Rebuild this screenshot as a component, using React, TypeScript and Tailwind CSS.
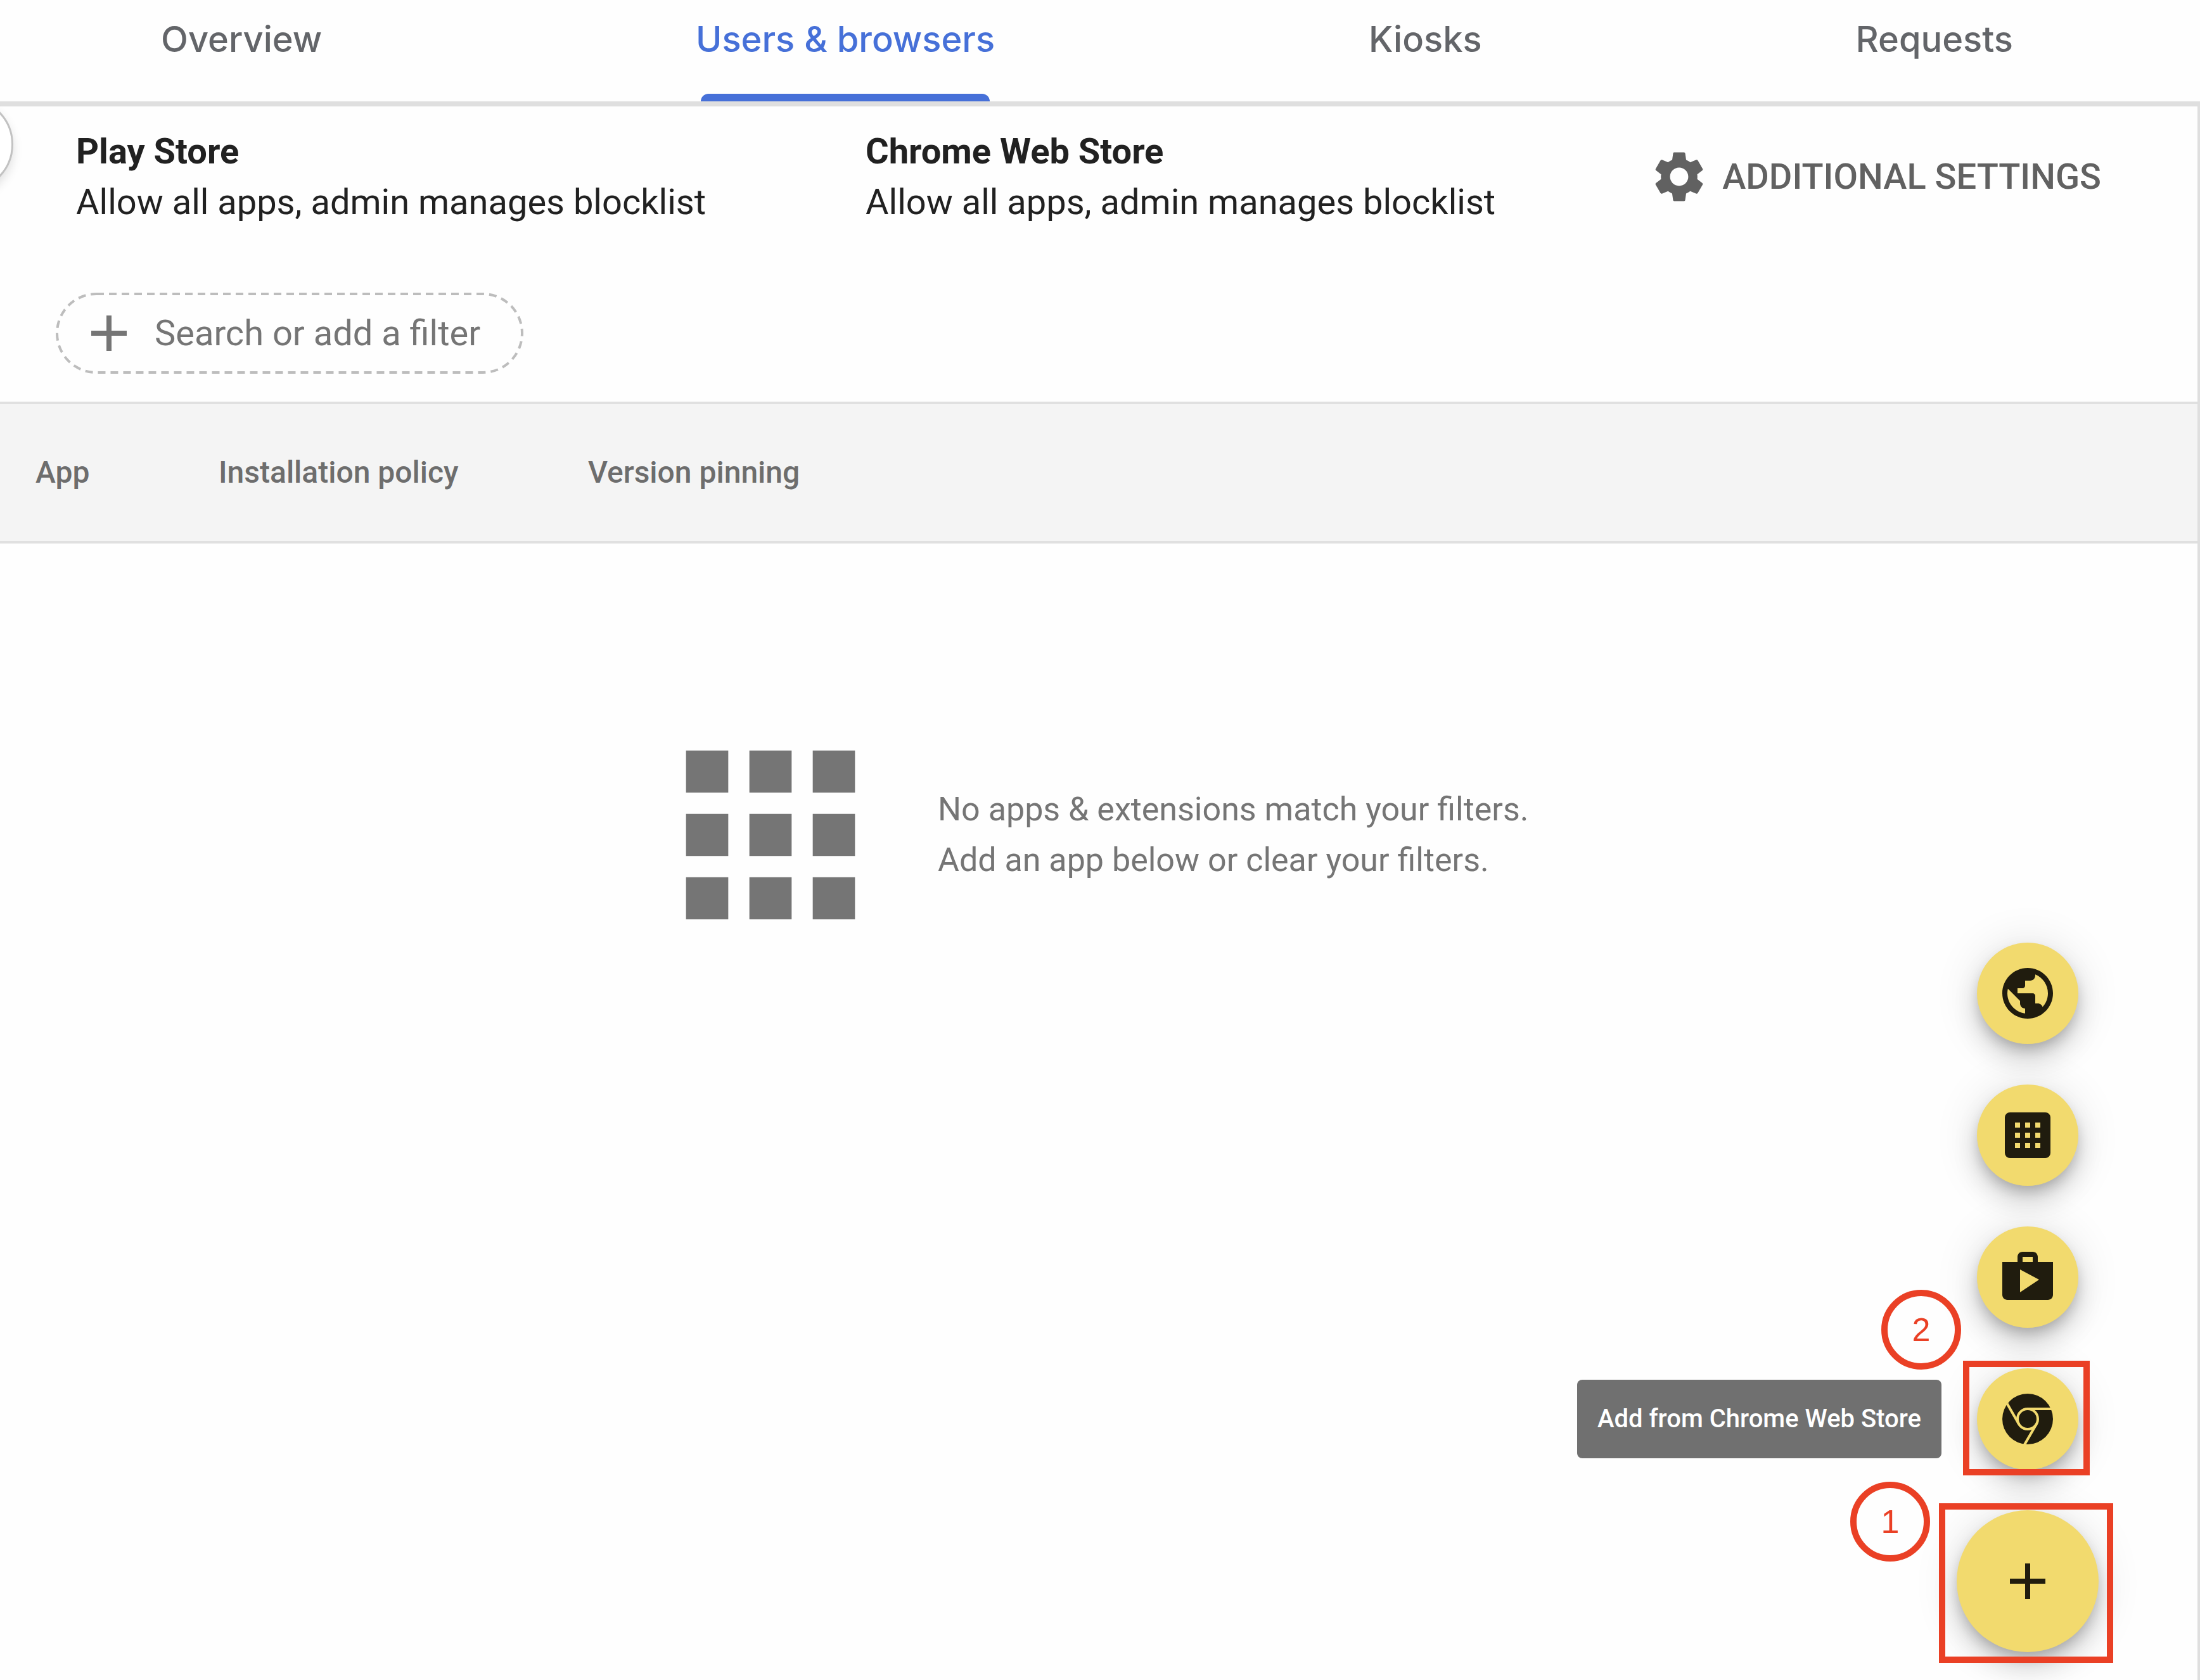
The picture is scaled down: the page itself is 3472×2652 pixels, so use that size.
import { MdAdd, MdApps, MdPublic, MdSettings, MdShop } from "react-icons/md";
import type { ReactNode } from "react";

const tabs = [
  { label: "Overview", active: false },
  { label: "Users & browsers", active: true },
  { label: "Kiosks", active: false },
  { label: "Requests", active: false },
];

const stores = [
  { name: "Play Store", policy: "Allow all apps, admin manages blocklist" },
  { name: "Chrome Web Store", policy: "Allow all apps, admin manages blocklist" },
];

function AppGridIcon() {
  return (
    <svg viewBox="0 0 24 24" className="size-24" fill="currentColor" aria-hidden="true">
      <path
        fillRule="evenodd"
        d="M5 3h14a2 2 0 0 1 2 2v14a2 2 0 0 1-2 2H5a2 2 0 0 1-2-2V5a2 2 0 0 1 2-2zM7 7v2h2V7zm4 0v2h2V7zm4 0v2h2V7zM7 11v2h2v-2zm4 0v2h2v-2zm4 0v2h2v-2zM7 15v2h2v-2zm4 0v2h2v-2zm4 0v2h2v-2z"
      />
    </svg>
  );
}

function ChromeIcon() {
  return (
    <svg viewBox="0 0 24 24" className="size-24" aria-hidden="true">
      <circle cx="12" cy="12" r="10" fill="currentColor" />
      <g fill="none" stroke="#f2da6e" strokeWidth="1">
        <circle cx="12" cy="12" r="4" />
        <path d="M12 8h9.6M8.54 14L3.9 5.96M15.46 14L10.6 22.4" />
      </g>
    </svg>
  );
}

function Fab({ label, children }: { label: string; children: ReactNode }) {
  return (
    <button
      type="button"
      aria-label={label}
      className="flex size-40 items-center justify-center rounded-full bg-[#f2da6e] text-[#201c0e] shadow-[0_12px_20px_-4px_rgba(0,0,0,0.2),0_24px_40px_rgba(0,0,0,0.14),0_4px_72px_rgba(0,0,0,0.12)]"
    >
      {children}
    </button>
  );
}

function Step({ n, className }: { n: number; className: string }) {
  return (
    <span
      className={`absolute flex size-[126px] items-center justify-center rounded-full border-10 border-[#ea4025] font-['Liberation_Sans',sans-serif] text-[52px] text-[#ea4025] ${className}`}
    >
      {n}
    </span>
  );
}

export default function App() {
  return (
    <div className="relative flex min-h-screen flex-col overflow-hidden bg-[#fefefe] font-[Roboto,sans-serif] text-[56px] leading-[80px] text-[#212121]">
      <nav className="flex h-[168px] justify-between border-b-8 border-[#dfdfdf] pr-[295px] pl-[254px] font-[Inter,sans-serif] font-medium">
        {tabs.map((tab) => (
          <a
            key={tab.label}
            href="#"
            className={
              tab.active
                ? "flex flex-col justify-between pt-[22px] text-[#4670d8]"
                : "pt-[22px] text-[#636569]"
            }
          >
            {tab.label}
            {tab.active && <span className="mx-2 h-3 rounded-t-xl bg-[#4670d8]" />}
          </a>
        ))}
      </nav>

      <button
        type="button"
        aria-label="Expand navigation"
        className="absolute top-[154px] -left-[127px] size-[148px] rounded-full border-3 border-[#c2c2c2] bg-white shadow-[0_8px_16px_rgba(0,0,0,0.12)]"
      />

      <main className="flex grow flex-col border-r-4 border-[#dfdfdf]">
        <section className="flex items-center justify-between pt-[31px] pr-[152px] pl-[120px]">
          <div className="flex gap-[252px]">
            {stores.map((store) => (
              <div key={store.name}>
                <h2 className="font-bold">{store.name}</h2>
                <p>{store.policy}</p>
              </div>
            ))}
          </div>
          <button type="button" className="flex items-center gap-5 font-medium text-[#616161]">
            <MdSettings className="size-24" />
            ADDITIONAL SETTINGS
          </button>
        </section>

        <div className="flex px-22 pt-[103px] pb-11">
          <label className="relative flex h-32 w-[738px] items-center gap-6 pl-9 text-[#757575]">
            <svg className="absolute inset-0 size-full overflow-visible p-0.5" aria-hidden="true">
              <rect
                width="100%"
                height="100%"
                rx="62"
                fill="none"
                stroke="#bdbdbd"
                strokeWidth="4"
                strokeDasharray="12 8"
              />
            </svg>
            <MdAdd className="size-24 shrink-0" />
            <input
              type="text"
              aria-label="Search or add a filter"
              placeholder="Search or add a filter"
              className="min-w-0 grow bg-transparent outline-none placeholder:text-[#757575]"
            />
          </label>
        </div>

        <table className="w-full border-y-4 border-[#e0e0e0] bg-[#f4f4f4] text-left text-5xl text-[#6d6d6d]">
          <thead>
            <tr className="h-[220px]">
              <th className="w-[345px] pl-14 font-medium">App</th>
              <th className="w-[583px] font-medium">Installation policy</th>
              <th className="font-medium">Version pinning</th>
            </tr>
          </thead>
        </table>

        <div className="flex items-center pt-[260px] pl-[1016px] text-[52px] text-[#757575]">
          <MdApps className="size-[400px] shrink-0" />
          <p className="pl-16">
            No apps &amp; extensions match your filters.
            <br />
            Add an app below or clear your filters.
          </p>
        </div>
      </main>

      <div className="absolute right-[160px] bottom-[44px] flex flex-col items-center gap-16">
        <Fab label="Add by URL">
          <MdPublic className="size-24" />
        </Fab>
        <Fab label="Add internal app">
          <AppGridIcon />
        </Fab>
        <Fab label="Add from Google Play">
          <MdShop className="size-24" />
        </Fab>
        <div className="relative">
          <Fab label="Add from Chrome Web Store">
            <ChromeIcon />
          </Fab>
          <span className="absolute -top-3 -right-[18px] -bottom-[9px] -left-[22px] border-10 border-[#ea4025]" />
          <Step n={2} className="right-[185px] bottom-[158px]" />
          <div
            role="tooltip"
            className="absolute top-[18px] right-[216px] flex h-[124px] items-center rounded-lg bg-[#707070] px-8 text-[40px] font-medium whitespace-nowrap text-white"
          >
            Add from Chrome Web Store
          </div>
        </div>
        <div className="relative">
          <button
            type="button"
            aria-label="Add app"
            className="flex size-56 items-center justify-center rounded-full bg-[#f2da6e] text-[#201c0e] shadow-[0_12px_20px_-4px_rgba(0,0,0,0.2),0_24px_40px_rgba(0,0,0,0.14),0_4px_72px_rgba(0,0,0,0.12)]"
          >
            <MdAdd className="size-24" />
          </button>
          <span className="absolute -top-[11px] -right-[23px] -bottom-[17px] -left-[28px] border-10 border-[#ea4025]" />
          <Step n={1} className="right-[266px] bottom-[143px]" />
        </div>
      </div>
    </div>
  );
}
